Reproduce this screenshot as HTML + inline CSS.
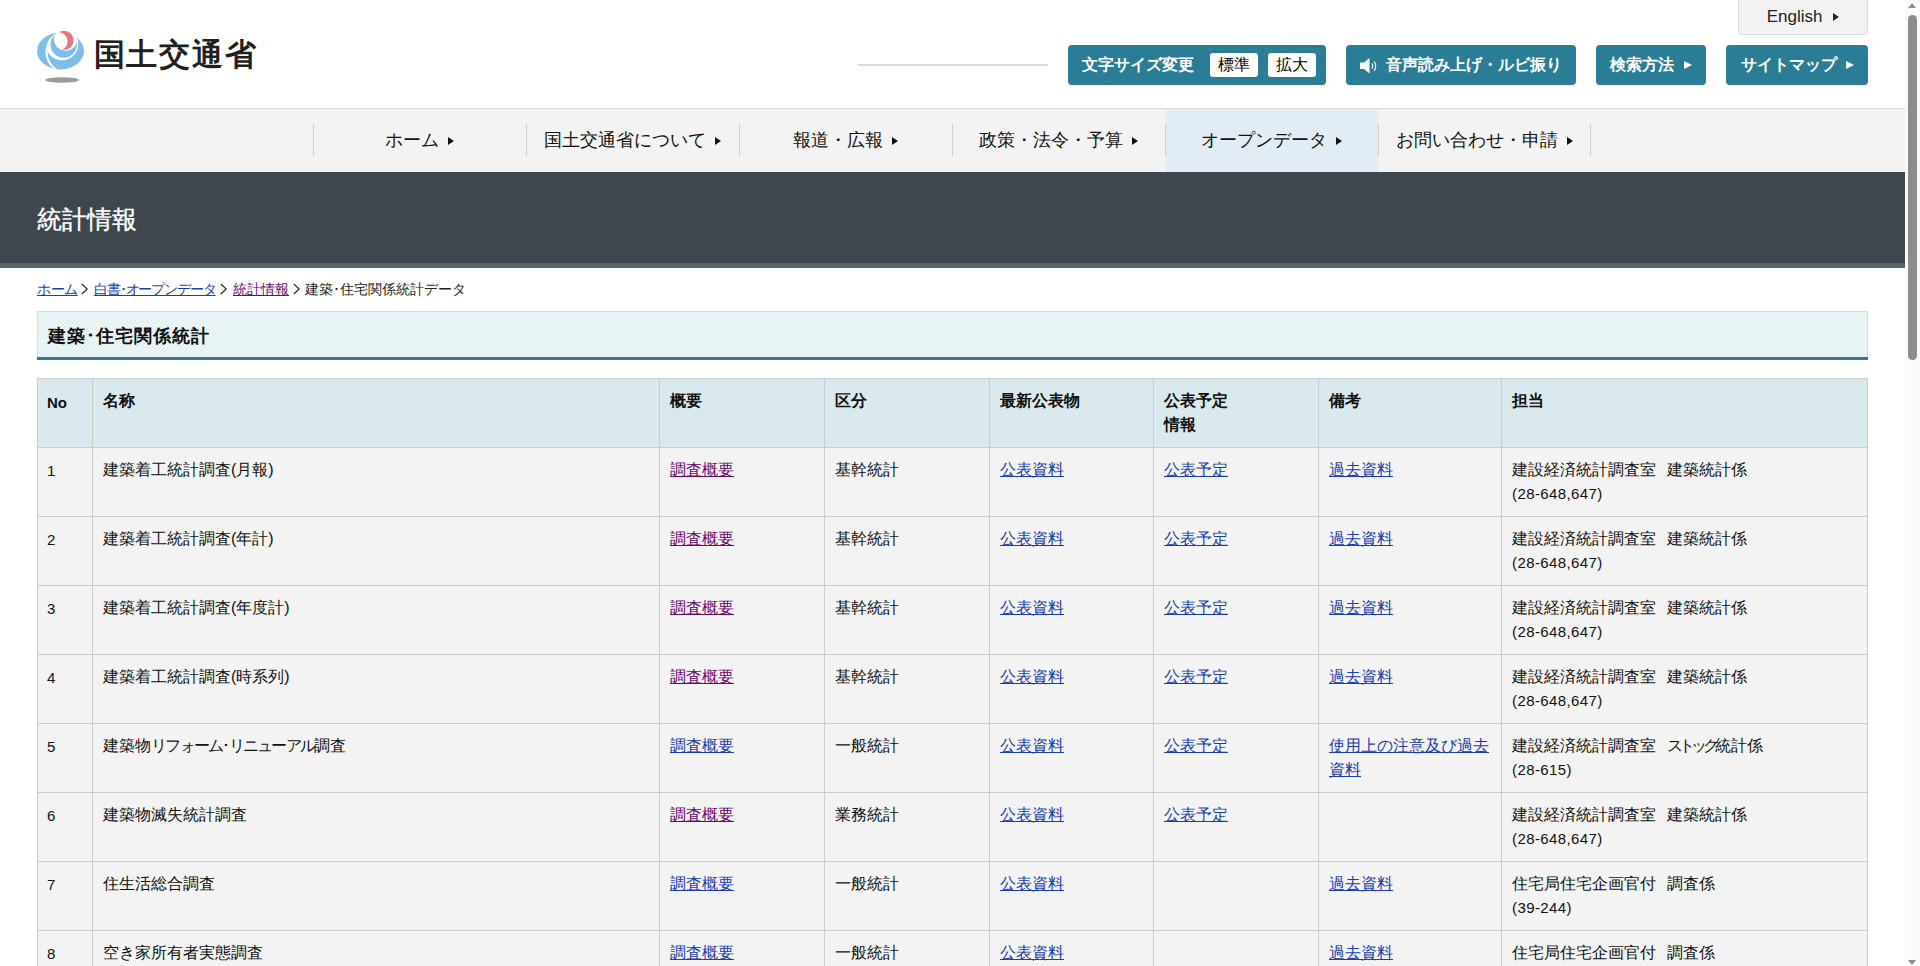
<!DOCTYPE html>
<html lang="ja">
<head>
<meta charset="utf-8">
<title>建築・住宅関係統計データ - 国土交通省</title>
<style>
*{box-sizing:border-box;margin:0;padding:0}
html,body{width:1920px;height:966px;overflow:hidden;background:#fff}
body{font-family:"Liberation Sans",sans-serif;color:#000;position:relative}
.abs{position:absolute}
#scroll{position:absolute;left:1905px;top:0;width:15px;height:966px;background:#fafafa}
#scroll .up{position:absolute;left:3px;top:3px;width:0;height:0;border-left:4.5px solid transparent;border-right:4.5px solid transparent;border-bottom:5px solid #8c8c8c}
#scroll .dn{position:absolute;left:3px;top:960px;width:0;height:0;border-left:4.5px solid transparent;border-right:4.5px solid transparent;border-top:5px solid #8c8c8c}
#scroll .thumb{position:absolute;left:3px;top:15px;width:9px;height:345px;border-radius:5px;background:#8c8c8c}
/* header */
#hdr{position:absolute;left:0;top:0;width:1905px;height:109px;border-bottom:1px solid #d6d6d6;background:#fff}
.logo-txt{position:absolute;left:93.5px;top:35.5px;font-size:31px;line-height:38px;font-weight:bold;color:#231f20;letter-spacing:1.75px;white-space:nowrap}
.sline{position:absolute;left:858px;top:64px;width:190px;height:2px;background:#d9d9d9}
.eng{position:absolute;left:1738px;top:-2px;width:130px;height:37px;background:#f2f2f2;border:1px solid #dadada;border-radius:0 0 4px 4px;font-size:17px;line-height:36px;color:#222;text-align:center}
.btn{position:absolute;top:45px;height:40px;background:#2b7d96;border-radius:4px;color:#fff;font-weight:bold;font-size:16px;line-height:40px;white-space:nowrap}
.tri{display:inline-block;width:0;height:0;border-top:4px solid transparent;border-bottom:4px solid transparent;border-left:7px solid currentColor;vertical-align:middle}
.btri{position:absolute;top:16px;width:0;height:0;border-top:4px solid transparent;border-bottom:4px solid transparent;border-left:8px solid #fff}
.wb{position:absolute;top:8px;width:48px;height:24px;background:#fff;border-radius:3px;color:#000;font-weight:normal;font-size:16px;line-height:24px;text-align:center}
/* nav */
#nav{position:absolute;left:0;top:109px;width:1905px;height:63px;background:#f3f3f3}
.ni{position:absolute;top:0;height:63px;width:213px;font-size:18px;line-height:63px;text-align:center;color:#111;white-space:nowrap}
.ni.on{background:#e2ecf4;box-shadow:none}
.hl{position:absolute;left:1166px;top:0;width:212px;height:63px;background:#e2ecf4}
.ntri{display:inline-block;width:0;height:0;border-top:4px solid transparent;border-bottom:4px solid transparent;border-left:6px solid #111;margin-left:9px;vertical-align:middle;position:relative;top:0px}
.dv{position:absolute;top:15px;width:1px;height:32px;background:#d0d0d0}
/* title */
#ttl{position:absolute;left:0;top:172px;width:1905px;height:96px;background:#3d474d;border-bottom:5px solid #57626a}
#ttl h1{position:absolute;left:37px;top:30px;font-size:25px;line-height:34px;font-weight:normal;color:#fff;-webkit-text-stroke:0.35px #fff}
/* breadcrumb */
#bc{position:absolute;left:37px;top:279px;width:600px;height:20px;font-size:14px;line-height:20px;color:#222;white-space:nowrap}
#bc a{color:#1a3db0;text-decoration:underline}
#bc a.v{color:#6a0a6a}
#bc a,#bc span{position:absolute;top:0}
#bc .sep{top:4px;line-height:0}
/* h2 */
#h2{position:absolute;left:37px;top:311px;width:1831px;height:46px;border:1px solid #c9dfe6;border-bottom:none;
background:#e4eff2}
#h2 svg{position:absolute;left:0;top:0}
#h2:after{content:"";position:absolute;left:-1px;right:-1px;bottom:-3px;height:3px;background:#2b7d96}
#h2 span{position:absolute;left:10px;top:13px;font-size:18px;line-height:22px;font-weight:bold;color:#111;letter-spacing:1px}
/* table */
#tbl{position:absolute;left:37px;top:378px;border-collapse:collapse;table-layout:fixed;width:1830px}
#tbl th,#tbl td{border:1px solid #cccccc;padding:10px 10px 10px 10px;vertical-align:top;text-align:left;font-size:16px;line-height:24px;height:69px}
#tbl th{background:#d9e9ed;font-weight:bold;color:#111}
#tbl td{background:#f3f3f3;color:#111}
#tbl a{color:#1a3db0;text-decoration:underline}
.noh{font-size:15px;position:relative;top:2px;left:-1px}
.nod{font-size:15px;position:relative;top:1px;left:-1px}
.num{font-size:15px;letter-spacing:0.4px}
.zs{display:inline-block;width:11px}
#tbl a.v{color:#6a0a6a}
</style>
</head>
<body>
<div id="hdr">
  <svg class="abs" style="left:34px;top:26px" width="56" height="60" viewBox="0 0 56 60">
    <defs>
      <clipPath id="cR"><circle cx="33.5" cy="25.75" r="20"/></clipPath>
      <mask id="mB" maskUnits="userSpaceOnUse" x="0" y="0" width="56" height="60"><rect width="56" height="60" fill="#fff"/>
        <circle cx="28" cy="18" r="16.3" fill="#000" clip-path="url(#cR)"/>
        <circle cx="33.5" cy="25.75" r="21" fill="none" stroke="#000" stroke-width="2"/></mask>
      <mask id="mC" maskUnits="userSpaceOnUse" x="0" y="0" width="56" height="60"><rect width="56" height="60" fill="#fff"/><circle cx="31.6" cy="13.1" r="11.7" fill="#000"/></mask>
      <mask id="mH" maskUnits="userSpaceOnUse" x="0" y="0" width="56" height="60"><rect width="56" height="60" fill="#fff"/><circle cx="24.15" cy="15.4" r="9.44" fill="#000"/></mask>
    </defs>
    <ellipse cx="26.5" cy="25" rx="23.5" ry="18.5" fill="#7dbde8" mask="url(#mB)"/>
    <circle cx="29.7" cy="18.5" r="13.2" fill="#7dbde8" mask="url(#mC)"/>
    <circle cx="29.9" cy="14.4" r="9.6" fill="#e8717b" mask="url(#mH)"/>
    <ellipse cx="28.1" cy="54" rx="16.9" ry="2.8" fill="#9b9b9b"/>
  </svg>
  <div class="logo-txt">国土交通省</div>
  <div class="sline"></div>
  <div class="eng">English <span class="tri" style="border-left-width:6px;border-top-width:4px;border-bottom-width:4px;margin-left:6px;margin-top:-2px"></span></div>
  <div class="btn" style="left:1068px;width:258px"><span style="position:absolute;left:14px">文字サイズ変更</span><span class="wb" style="left:142px">標準</span><span class="wb" style="left:200px">拡大</span></div>
  <div class="btn" style="left:1346px;width:230px"><svg style="position:absolute;left:14px;top:13px" width="18" height="16" viewBox="0 0 18 16"><path d="M0 4.5h4l5.5-4.5v15.5l-5.5-4.5h-4z" fill="#fff"/><path d="M12 5.2q1.6 2.8 0 5.6M14.2 3.2q3 4.8 0 9.6" fill="none" stroke="#fff" stroke-width="1.1"/></svg><span style="position:absolute;left:40px">音声読み上げ・ルビ振り</span></div>
  <div class="btn" style="left:1596px;width:110px"><span style="position:absolute;left:14px">検索方法</span><i class="btri" style="left:88px"></i></div>
  <div class="btn" style="left:1726px;width:142px"><span style="position:absolute;left:15px">サイトマップ</span><i class="btri" style="left:120px"></i></div>
</div>
<div id="nav">
  <div class="ni" style="left:313px">ホーム<i class="ntri"></i></div>
  <div class="ni" style="left:526px">国土交通省について<i class="ntri"></i></div>
  <div class="ni" style="left:739px">報道・広報<i class="ntri"></i></div>
  <div class="ni" style="left:952px">政策・法令・予算<i class="ntri"></i></div>
  <div class="hl"></div><div class="ni" style="left:1165px">オープンデータ<i class="ntri"></i></div>
  <div class="ni" style="left:1378px">お問い合わせ・申請<i class="ntri"></i></div>
  <div class="dv" style="left:313px"></div><div class="dv" style="left:526px"></div><div class="dv" style="left:739px"></div><div class="dv" style="left:952px"></div><div class="dv" style="left:1165px"></div><div class="dv" style="left:1378px"></div><div class="dv" style="left:1590px"></div>
</div>
<div id="ttl"><h1>統計情報</h1></div>
<div id="bc"><a href="#" style="left:0;letter-spacing:-0.5px">ホーム</a><span class="sep" style="left:44px"><svg width="7" height="12" viewBox="0 0 7 12"><path d="M0.8 1L6.2 6L0.8 11" fill="none" stroke="#222" stroke-width="1.1"/></svg></span><a href="#" style="left:57px;letter-spacing:-1.15px">白書･オープンデータ</a><span class="sep" style="left:183px"><svg width="7" height="12" viewBox="0 0 7 12"><path d="M0.8 1L6.2 6L0.8 11" fill="none" stroke="#222" stroke-width="1.1"/></svg></span><a class="v" href="#" style="left:196px">統計情報</a><span class="sep" style="left:256px"><svg width="7" height="12" viewBox="0 0 7 12"><path d="M0.8 1L6.2 6L0.8 11" fill="none" stroke="#222" stroke-width="1.1"/></svg></span><span style="left:268px" id="bct">建築･住宅関係統計データ</span></div>
<div id="h2"><svg width="1829" height="45"><defs><pattern id="pS" width="4" height="4" patternUnits="userSpaceOnUse"><path d="M-1 1L1 -1M0 4L4 0M3 5L5 3" stroke="#fbfdfd" stroke-width="1"/></pattern></defs><rect width="1829" height="45" fill="url(#pS)"/></svg><span>建築･住宅関係統計</span></div>
<table id="tbl">
<colgroup><col style="width:55px"><col style="width:567px"><col style="width:165px"><col style="width:165px"><col style="width:164px"><col style="width:165px"><col style="width:183px"><col style="width:366px"></colgroup>
<tr><th><span class="noh">No</span></th><th>名称</th><th>概要</th><th>区分</th><th>最新公表物</th><th>公表予定<br>情報</th><th>備考</th><th>担当</th></tr>
<tr><td><span class="nod">1</span></td><td>建築着工統計調査(月報)</td><td><a class="v" href="#">調査概要</a></td><td>基幹統計</td><td><a href="#">公表資料</a></td><td><a href="#">公表予定</a></td><td><a href="#">過去資料</a></td><td>建設経済統計調査室<span class="zs"></span>建築統計係<br><span class="num">(28-648,647)</span></td></tr>
<tr><td><span class="nod">2</span></td><td>建築着工統計調査(年計)</td><td><a class="v" href="#">調査概要</a></td><td>基幹統計</td><td><a href="#">公表資料</a></td><td><a href="#">公表予定</a></td><td><a href="#">過去資料</a></td><td>建設経済統計調査室<span class="zs"></span>建築統計係<br><span class="num">(28-648,647)</span></td></tr>
<tr><td><span class="nod">3</span></td><td>建築着工統計調査(年度計)</td><td><a class="v" href="#">調査概要</a></td><td>基幹統計</td><td><a href="#">公表資料</a></td><td><a href="#">公表予定</a></td><td><a href="#">過去資料</a></td><td>建設経済統計調査室<span class="zs"></span>建築統計係<br><span class="num">(28-648,647)</span></td></tr>
<tr><td><span class="nod">4</span></td><td>建築着工統計調査(時系列)</td><td><a class="v" href="#">調査概要</a></td><td>基幹統計</td><td><a href="#">公表資料</a></td><td><a href="#">公表予定</a></td><td><a href="#">過去資料</a></td><td>建設経済統計調査室<span class="zs"></span>建築統計係<br><span class="num">(28-648,647)</span></td></tr>
<tr><td><span class="nod">5</span></td><td>建築物<span style="letter-spacing:-1.75px">リフォーム･リニューアル</span>調査</td><td><a href="#">調査概要</a></td><td>一般統計</td><td><a href="#">公表資料</a></td><td><a href="#">公表予定</a></td><td><a href="#">使用上の注意及び過去<br>資料</a></td><td>建設経済統計調査室<span class="zs"></span><span style="letter-spacing:-4px">ストック</span>統計係<br><span class="num">(28-615)</span></td></tr>
<tr><td><span class="nod">6</span></td><td>建築物滅失統計調査</td><td><a class="v" href="#">調査概要</a></td><td>業務統計</td><td><a href="#">公表資料</a></td><td><a href="#">公表予定</a></td><td></td><td>建設経済統計調査室<span class="zs"></span>建築統計係<br><span class="num">(28-648,647)</span></td></tr>
<tr><td><span class="nod">7</span></td><td>住生活総合調査</td><td><a href="#">調査概要</a></td><td>一般統計</td><td><a href="#">公表資料</a></td><td></td><td><a href="#">過去資料</a></td><td>住宅局住宅企画官付<span class="zs"></span>調査係<br><span class="num">(39-244)</span></td></tr>
<tr><td><span class="nod">8</span></td><td>空き家所有者実態調査</td><td><a href="#">調査概要</a></td><td>一般統計</td><td><a href="#">公表資料</a></td><td></td><td><a href="#">過去資料</a></td><td>住宅局住宅企画官付<span class="zs"></span>調査係<br><span class="num">(39-244)</span></td></tr>
</table>
<div id="scroll"><div class="up"></div><div class="thumb"></div><div class="dn"></div></div>
</body>
</html>
